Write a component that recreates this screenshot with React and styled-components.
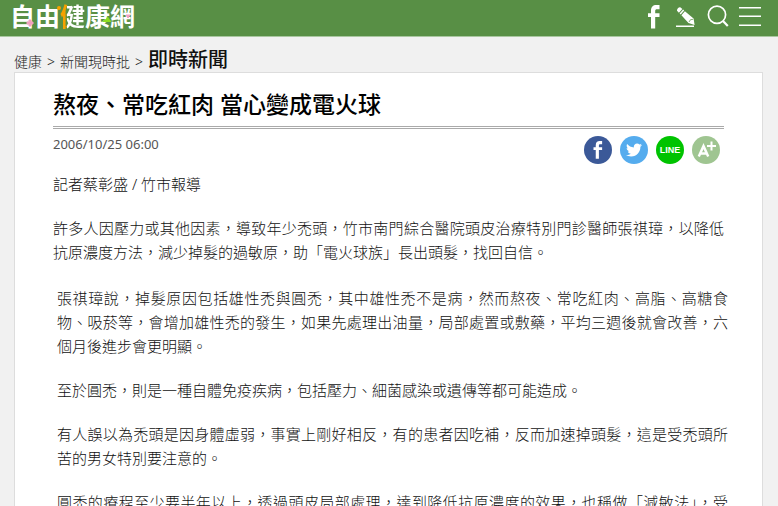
import React from 'react';
import { FaTwitter } from 'react-icons/fa';
import styled, { createGlobalStyle } from 'styled-components';

const GlobalStyle = createGlobalStyle`
  * {
    box-sizing: border-box;
  }

  body {
    margin: 0;
    background: #f1f1f1;
    color: #111;
    font-family: 'Noto Sans', 'Noto Sans CJK TC', sans-serif;
    font-size: 15px;
    line-height: 24px;
  }

  h1,
  p,
  ol {
    margin: 0;
    padding: 0;
  }

  a {
    color: inherit;
    text-decoration: none;
  }
`;

const Header = styled.header`
  display: flex;
  justify-content: space-between;
  align-items: flex-start;
  height: 37px;
  padding: 0 16px 0 10px;
  background: #588f45;
  border-bottom: 1px solid #a9c7a0;
`;

const Logo = styled.a`
  position: relative;
  color: #fff;
  font-family: 'Noto Sans CJK TC', sans-serif;
  font-size: 25px;
  font-weight: 700;
  line-height: 30px;

  svg {
    position: absolute;
    top: 0;
    left: 0;
  }
`;

/* the left part of this character is orange */
const LogoTwoTone = styled.span`
  background: linear-gradient(to right, #f5a100 7px, #fff 7px);
  background-clip: text;
  -webkit-background-clip: text;
  color: transparent;
`;

const Tools = styled.nav`
  display: flex;
  align-items: center;
  gap: 8px;
  padding-top: 5px;
`;

const ToolButton = styled.button`
  display: flex;
  width: 24px;
  height: 24px;
  padding: 0;
  border: 0;
  background: none;
  color: #fff;
  cursor: pointer;
`;

const Breadcrumb = styled.ol`
  display: flex;
  align-items: baseline;
  gap: 5px;
  padding: 13px 14px 0;
  line-height: 20px;
  list-style: none;
`;

const Crumb = styled.li`
  color: ${({ $current }) => ($current ? '#111' : '#222')};
  font-size: ${({ $current }) => ($current ? '20px' : '14px')};
  font-weight: ${({ $current }) => ($current ? 500 : 300)};
`;

const Card = styled.main`
  margin: 0 15px 0 14px;
  padding: 15px 38px 40px;
  background: #fff;
  border: 1px solid #ddd;
`;

const Title = styled.h1`
  padding-bottom: 6px;
  border-bottom: 3px double #aaa;
  color: #000;
  font-size: 23px;
  font-weight: 500;
  line-height: 32px;
`;

const Meta = styled.div`
  display: flex;
  justify-content: space-between;
  align-items: flex-start;
  padding: 7px 4px 0 0;
`;

const PublishTime = styled.time`
  color: #555;
  font-size: 13px;
  line-height: 16px;
`;

const Share = styled.div`
  display: flex;
  gap: 8px;
`;

const ShareButton = styled.button`
  display: flex;
  justify-content: center;
  align-items: center;
  width: 28px;
  height: 28px;
  padding: 0;
  border: 0;
  border-radius: 50%;
  background: ${({ $color }) => $color};
  color: #fff;
  font-family: 'Liberation Sans', sans-serif;
  font-size: 9px;
  font-weight: 700;
  cursor: pointer;
`;

const Paragraph = styled.p`
  font-weight: 300;
  text-align: justify;
  text-align-last: ${({ $filled }) => ($filled ? 'justify' : 'auto')};
`;

const Lead = styled.div`
  display: flex;
  flex-direction: column;
  gap: 20px;
  padding-top: 8px;
`;

const Body = styled.div`
  display: flex;
  flex-direction: column;
  gap: 20px;
  margin: 22px -4px 0 4px;
`;

const FacebookIcon = ({ size = 24 }) => (
  <svg width={size} height={size} viewBox="0 0 24 24" fill="currentColor">
    <path d="M17.500 0v4.200H15c-1.300 0-1.800.6-1.800 1.900V8.200h4.300V12h-4.300v11.500H9V12H6V8.200h3V5.500C9 2 11 0 14.200 0z" />
  </svg>
);

const PencilIcon = () => (
  <svg width="24" height="24" viewBox="0 0 24 24" fill="currentColor">
    <path d="M3 5c.3-1.500 2-3 3.200-2.700L8.400 4 4.900 7.800 3 5.800zM9.100 4.600l1.100 1-3.500 3.900-1.100-1.100zM10.900 6.200l8.700 7.400 1 6.300-6.100-1.900-7.100-7.700z" />
    <path d="M2 20.500h18V22H2z" />
    <path d="M15 17l1.500-2.300 2.700-.4" fill="none" stroke="#588f45" strokeWidth=".7" />
  </svg>
);

const SearchIcon = () => (
  <svg width="24" height="24" viewBox="0 0 24 24" fill="none" stroke="currentColor" strokeWidth="1.7">
    <circle cx="11" cy="9.800" r="8.600" />
    <path d="M17 16l4.800 5" strokeWidth="2.200" />
  </svg>
);

const MenuIcon = () => (
  <svg width="24" height="24" viewBox="0 0 24 24" fill="currentColor">
    <path d="M1 2h22v1.500H1zM1 10.500h22V12H1zM1 19.500h22V21H1z" />
  </svg>
);

const EnlargeIcon = () => (
  <svg width="28" height="28" viewBox="0 0 28 28" fill="none" stroke="currentColor">
    <path d="M6.800 20.500L11.500 10l4.700 10.500M8.500 17.500h6" strokeWidth="2.500" />
    <path d="M19.500 5.500v9M15 10h9" strokeWidth="2" />
  </svg>
);

const crumbs = ['健康', '新聞現時批'];

const paragraphs = [
  '張祺璋說，掉髮原因包括雄性禿與圓禿，其中雄性禿不是病，然而熬夜、常吃紅肉、高脂、高糖食物、吸菸等，會增加雄性禿的發生，如果先處理出油量，局部處置或敷藥，平均三週後就會改善，六個月後進步會更明顯。',
  '至於圓禿，則是一種自體免疫疾病，包括壓力、細菌感染或遺傳等都可能造成。',
  '有人誤以為禿頭是因身體虛弱，事實上剛好相反，有的患者因吃補，反而加速掉頭髮，這是受禿頭所苦的男女特別要注意的。',
  '圓禿的療程至少要半年以上，透過頭皮局部處理，達到降低抗原濃度的效果，也稱做「減敏法」，受',
];

const App = () => (
  <>
    <GlobalStyle />
    <Header>
      <Logo href="#">
        自由<LogoTwoTone>健</LogoTwoTone>康網
        <svg width="126" height="32" viewBox="0 0 126 32">
          <circle cx="49" cy="8" r="2" fill="#f5a100" />
          <path d="M17 22h2v-2h2v2h2v2h-2v2h-2v-2h-2z" fill="#f3a0c0" stroke="#f3a0c0" />
          <path d="M92 22q2-3 4-3 0-2 2-2 1 1 2 3 1 0 1 2z" fill="#8fdc1f" />
          <path d="M116 15h4l-2 3z" fill="#f3a0c0" stroke="#f3a0c0" />
        </svg>
      </Logo>
      <Tools>
        <ToolButton aria-label="Facebook">
          <FacebookIcon />
        </ToolButton>
        <ToolButton aria-label="投稿">
          <PencilIcon />
        </ToolButton>
        <ToolButton aria-label="搜尋">
          <SearchIcon />
        </ToolButton>
        <ToolButton aria-label="選單">
          <MenuIcon />
        </ToolButton>
      </Tools>
    </Header>

    <Breadcrumb>
      {crumbs.map(item => (
        <React.Fragment key={item}>
          <Crumb>
            <a href="#">{item}</a>
          </Crumb>
          <Crumb aria-hidden="true">&gt;</Crumb>
        </React.Fragment>
      ))}
      <Crumb $current>即時新聞</Crumb>
    </Breadcrumb>

    <Card>
      <Title>熬夜、常吃紅肉 當心變成電火球</Title>
      <Meta>
        <PublishTime>2006/10/25 06:00</PublishTime>
        <Share>
          <ShareButton $color="#3b5998" aria-label="Facebook">
            <FacebookIcon size={18} />
          </ShareButton>
          <ShareButton $color="#55acee" aria-label="Twitter">
            <FaTwitter size={16} />
          </ShareButton>
          <ShareButton $color="#00c300">LINE</ShareButton>
          <ShareButton $color="#9fc591" aria-label="放大字體">
            <EnlargeIcon />
          </ShareButton>
        </Share>
      </Meta>

      <Lead>
        <Paragraph>記者蔡彰盛 / 竹市報導</Paragraph>
        <Paragraph>
          許多人因壓力或其他因素，導致年少禿頭，竹市南門綜合醫院頭皮治療特別門診醫師張祺璋，以降低抗原濃度方法，減少掉髮的過敏原，助「電火球族」長出頭髮，找回自信。
        </Paragraph>
      </Lead>
      <Body>
        {paragraphs.map((text, i) => (
          <Paragraph key={text} $filled={i === paragraphs.length - 1}>
            {text}
          </Paragraph>
        ))}
      </Body>
    </Card>
  </>
);

export default App;
